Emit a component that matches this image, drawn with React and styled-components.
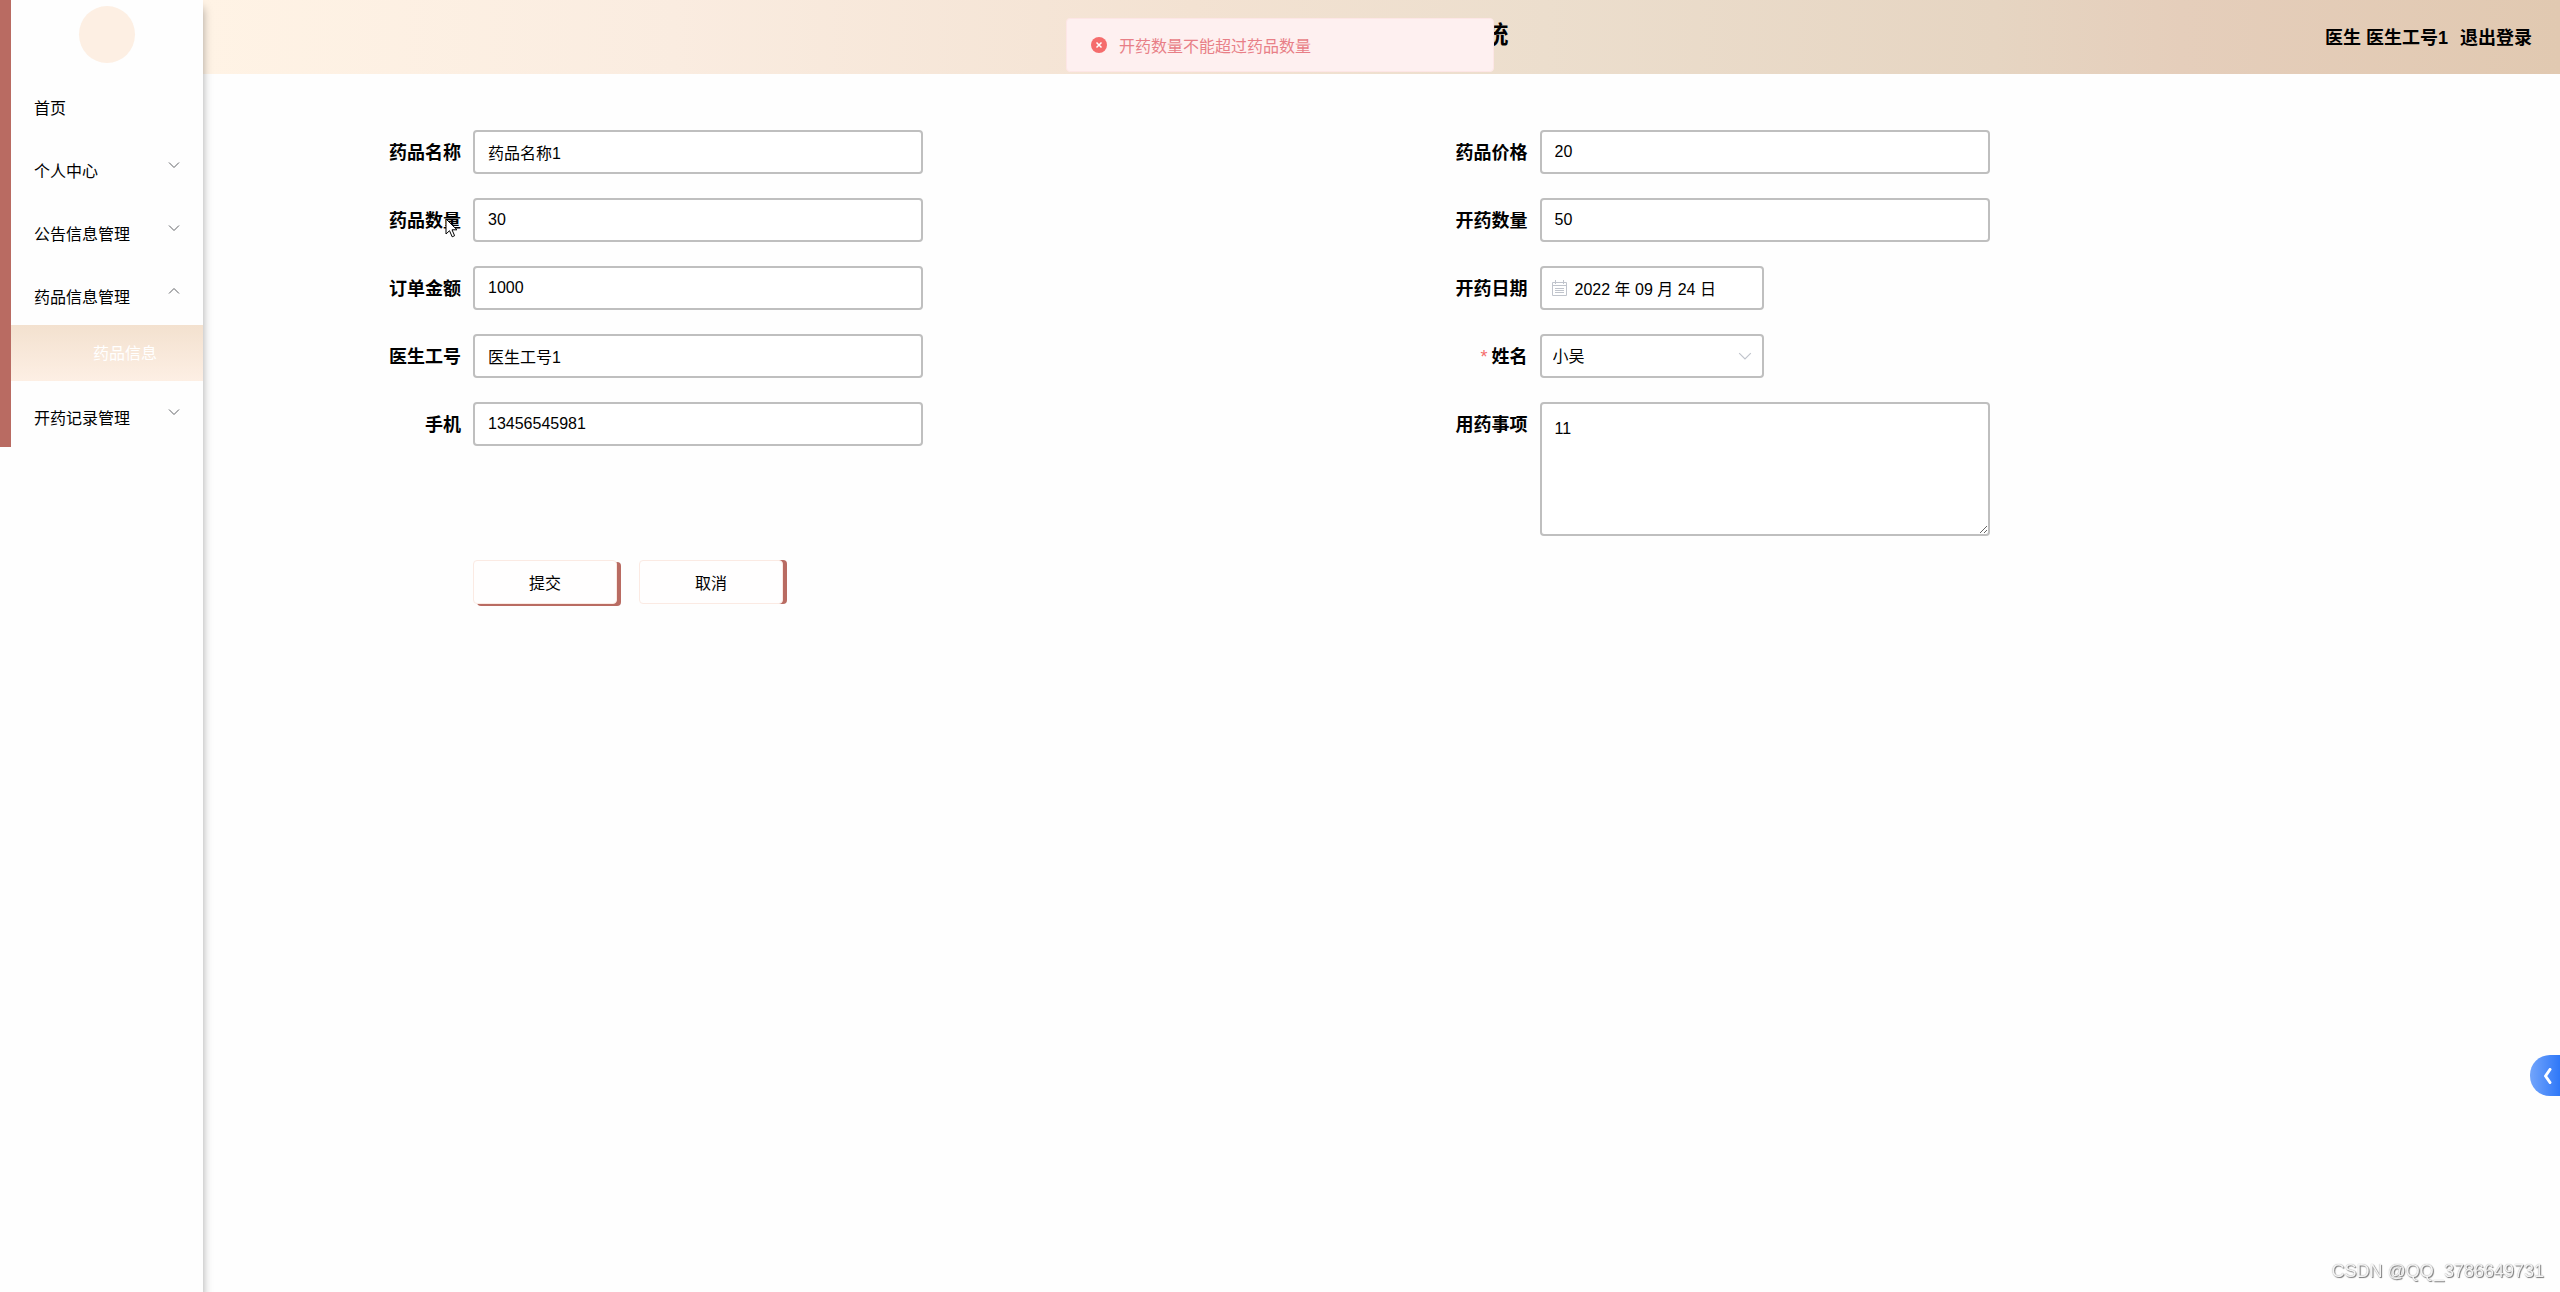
import React, { useState } from "react";
import styled, { createGlobalStyle } from "styled-components";

const GlobalStyle = createGlobalStyle`
  *, *::before, *::after { box-sizing: border-box; }
  body {
    margin: 0;
    background: #fefefe;
    color: #000;
    font-family: "Liberation Sans", "Noto Sans CJK SC", sans-serif;
    font-size: 16px;
  }
  button, input, select, textarea { font: inherit; color: inherit; }
`;

const Shell = styled.div`
  display: flex;
  min-height: 100vh;
`;

const Sidebar = styled.aside`
  flex: 0 0 203px;
  background: #fefefe;
  box-shadow: 0 8px 9px rgba(0, 0, 0, 0.34);
  z-index: 1;
`;

const Nav = styled.nav`
  display: flex;
  flex-direction: column;
  padding: 6px 0 1px;
  border-left: 11px solid #b96b62;
`;

const Avatar = styled.div`
  width: 56px;
  height: 57px;
  margin: 0 0 17px 68px;
  border-radius: 50%;
  background: #fdefe3;
`;

const MenuItem = styled.button`
  display: flex;
  align-items: center;
  justify-content: space-between;
  height: 56px;
  margin-bottom: ${(p) => (p.$open ? 0 : 7)}px;
  padding: 0 23px 2px;
  border: 0;
  background: none;
  text-align: left;
  cursor: pointer;

  &:last-child { margin-bottom: 0; }
  svg { margin-bottom: 10px; }
`;

const SubItem = styled.a`
  height: 56px;
  margin-bottom: 9px;
  padding-left: 82px;
  background: linear-gradient(#f3e1cf, #fdefe4);
  color: #fff;
  line-height: 58px;
  text-decoration: none;
`;

const Page = styled.div`
  flex: 1;
  min-width: 0;
`;

const Header = styled.header`
  display: grid;
  grid-template-columns: 1fr 254px 1fr;
  align-items: center;
  height: 74px;
  padding-right: 28px;
  padding-left: 28px;
  background: linear-gradient(90deg, #fff3e5 0%, #faece0 20%, #f3e2d2 42%, #ecdecd 57%, #e6d5c2 76%, #e5cebb 84%, #e1c9b1 100%);
  font-weight: 700;
`;

const Title = styled.h1`
  grid-column: 2;
  margin: 0;
  padding-bottom: 4px;
  font-size: 24px;
  line-height: 36px;
  text-align: right;
`;

const Account = styled.div`
  display: flex;
  justify-content: flex-end;
  gap: 12px;
  padding-top: 2px;
  font-size: 18px;
  line-height: 24px;
`;

const Logout = styled.a`
  color: inherit;
  text-decoration: none;
`;

const Form = styled.form`
  display: grid;
  grid-template-columns: 1fr 1fr;
  row-gap: 24px;
  padding: 56px 112px;
`;

const Field = styled.div`
  display: flex;
  align-items: flex-start;
`;

const Label = styled.label`
  flex: 0 0 158px;
  height: 44px;
  padding-right: 12px;
  font-size: 18px;
  font-weight: 700;
  line-height: 46px;
  text-align: right;
`;

const Star = styled.span`
  margin-right: 4px;
  color: #f56c6c;
  font-weight: 400;
`;

const Input = styled.input`
  width: ${(p) => (p.$short ? 224 : 450)}px;
  height: 44px;
  padding: 0 13px 0 ${(p) => (p.$icon ? 33 : 13)}px;
  border: 2px solid #bfbfbf;
  border-radius: 4px;
  outline: 0;
  background: #fff;
`;

const Select = styled.select`
  width: 224px;
  height: 44px;
  padding: 0 11px;
  appearance: none;
  border: 2px solid #bfbfbf;
  border-radius: 4px;
  outline: 0;
  background: #fff;
`;

const Textarea = styled.textarea`
  width: 450px;
  height: 134px;
  padding: 15px 13px;
  border: 2px solid #bfbfbf;
  border-radius: 4px;
  outline: 0;
  background: #fff;
  line-height: 20px;
  resize: vertical;
`;

const Control = styled.div`
  position: relative;
  display: flex;
`;

const ControlIcon = styled.span`
  position: absolute;
  top: 0;
  bottom: 0;
  ${(p) => p.$side}: 12px;
  display: flex;
  align-items: center;
  pointer-events: none;
`;

const Actions = styled.div`
  grid-column: 1 / -1;
  display: flex;
  gap: 22px;
  padding-left: 158px;
`;

const Button = styled.button`
  width: 144px;
  height: 44px;
  border: 1px solid #fbeae3;
  border-radius: 4px;
  background: #fffefe;
  box-shadow: 4px ${(p) => (p.$primary ? 2 : 0)}px 0 #b96b62;
  cursor: pointer;
`;

const Toast = styled.div`
  position: fixed;
  top: 18px;
  left: 50%;
  z-index: 5;
  display: flex;
  align-items: center;
  gap: 12px;
  width: 428px;
  height: 54px;
  padding-left: 24px;
  border: 1px solid #fde6e6;
  border-radius: 4px;
  background: #fef0f0;
  color: #e87f87;
  transform: translateX(-50%);
`;

const Drawer = styled.button`
  position: fixed;
  right: 0;
  bottom: 196px;
  display: flex;
  align-items: center;
  justify-content: flex-end;
  width: 30px;
  height: 41px;
  padding: 0 8px 0 0;
  border: 0;
  border-radius: 20px 0 0 20px;
  background: linear-gradient(90deg, #73a5fb, #2f78f8);
  cursor: pointer;
`;

const Watermark = styled.div`
  position: fixed;
  right: 16px;
  bottom: 9px;
  color: #f4f4f4;
  font-size: 18px;
  line-height: 24px;
  text-shadow: 1px 1px 1px #777, 0 0 1px #999;
`;

const Pointer = styled.svg`
  position: fixed;
  top: 218px;
  left: 445px;
  z-index: 6;
  pointer-events: none;
`;

const Chevron = ({ up, size = 12, color = "#606266" }) => (
  <svg width={size} height={size} viewBox="0 0 12 12" fill="none" stroke={color} strokeWidth="1">
    <path d={up ? "M1 8.5 6 3.5l5 5" : "M1 3.5l5 5 5-5"} />
  </svg>
);

const CalendarIcon = () => (
  <svg width="15" height="16" viewBox="0 0 15 16" fill="none" stroke="#c0c4cc">
    <path d="M.5 2.5h14v13H.5zM.5 5.5h14M3 8.5h9M3 10.5h9M3 12.5h9M3.5 0v4M11.5 0v4" />
  </svg>
);

const menu = [
  { name: "首页" },
  { name: "个人中心", group: true },
  { name: "公告信息管理", group: true },
  { name: "药品信息管理", group: true, child: "药品信息" },
  { name: "开药记录管理", group: true },
];

const TextField = ({ id, label, value }) => (
  <Field>
    <Label htmlFor={id}>{label}</Label>
    <Input id={id} defaultValue={value} />
  </Field>
);

export default function App() {
  const [patient, setPatient] = useState("小吴");

  return (
    <>
      <GlobalStyle />
      <Shell>
        <Sidebar>
          <Nav>
            <Avatar />
            {menu.map((item) => (
              <React.Fragment key={item.name}>
                <MenuItem type="button" $open={Boolean(item.child)}>
                  {item.name}
                  {item.group && <Chevron up={Boolean(item.child)} />}
                </MenuItem>
                {item.child && <SubItem href="#drugs">{item.child}</SubItem>}
              </React.Fragment>
            ))}
          </Nav>
        </Sidebar>
        <Page>
          <Header>
            <Title>统</Title>
            <Account>
              <span>医生 医生工号1</span>
              <Logout href="#logout">退出登录</Logout>
            </Account>
          </Header>
          <Form onSubmit={(e) => e.preventDefault()}>
            <TextField id="name" label="药品名称" value="药品名称1" />
            <TextField id="price" label="药品价格" value="20" />
            <TextField id="stock" label="药品数量" value="30" />
            <TextField id="count" label="开药数量" value="50" />
            <TextField id="amount" label="订单金额" value="1000" />
            <Field>
              <Label htmlFor="date">开药日期</Label>
              <Control>
                <Input id="date" $short $icon defaultValue="2022 年 09 月 24 日" />
                <ControlIcon $side="left"><CalendarIcon /></ControlIcon>
              </Control>
            </Field>
            <TextField id="doctor" label="医生工号" value="医生工号1" />
            <Field>
              <Label htmlFor="patient"><Star>*</Star>姓名</Label>
              <Control>
                <Select id="patient" value={patient} onChange={(e) => setPatient(e.target.value)}>
                  <option>小吴</option>
                </Select>
                <ControlIcon $side="right"><Chevron size={14} color="#c0c4cc" /></ControlIcon>
              </Control>
            </Field>
            <TextField id="phone" label="手机" value="13456545981" />
            <Field>
              <Label htmlFor="notes">用药事项</Label>
              <Textarea id="notes" defaultValue="11" />
            </Field>
            <Actions>
              <Button type="submit" $primary>提交</Button>
              <Button type="button">取消</Button>
            </Actions>
          </Form>
        </Page>
      </Shell>
      <Toast role="alert">
        <svg width="16" height="16" viewBox="0 0 16 16">
          <circle cx="8" cy="8" r="8" fill="#f56c6c" />
          <path d="M5.5 5.5l5 5M10.5 5.5l-5 5" stroke="#fff" strokeWidth="1.5" />
        </svg>
        开药数量不能超过药品数量
      </Toast>
      <Drawer type="button" aria-label="展开">
        <svg width="9" height="16" viewBox="0 0 9 16" fill="none" stroke="#fff" strokeWidth="3">
          <path d="M7 1.5 2.5 8 7 14.5" strokeLinecap="round" strokeLinejoin="round" />
        </svg>
      </Drawer>
      <Watermark>CSDN @QQ_3786649731</Watermark>
      <Pointer width="14" height="20" viewBox="0 0 14 20">
        <path d="M1 1v15l3.500-3.300 2.700 6.100 2.400-1.100-2.600-5.900H12z" fill="#fff" stroke="#000" />
      </Pointer>
    </>
  );
}
